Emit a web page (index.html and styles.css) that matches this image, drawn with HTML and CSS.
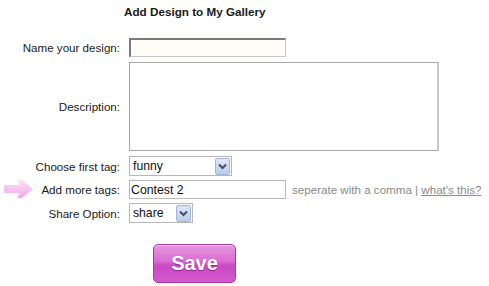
FILE: index.html
```html
<!DOCTYPE html>
<html>
<head>
<meta charset="utf-8">
<link rel="stylesheet" href="styles.css">
</head>
<body>
<div class="page">
  <h1 class="title">Add Design to My Gallery</h1>
  <form class="form">
    <div class="row row-name">
      <label class="label">Name your design:</label>
      <input class="text text-name" type="text">
    </div>
    <div class="row row-desc">
      <label class="label">Description:</label>
      <textarea class="area"></textarea>
    </div>
    <div class="row row-first">
      <label class="label">Choose first tag:</label>
      <div class="select select-first">
        <span class="select-value">funny</span>
        <span class="select-btn"><svg width="9" height="7" viewBox="0 0 9 7"><path d="M1 1.5 L4.5 5 L8 1.5" fill="none" stroke="#3b4f78" stroke-width="2"/></svg></span>
      </div>
    </div>
    <div class="row row-more">
      <span class="pointer"><svg width="30" height="20" viewBox="0 0 30 20"><defs><linearGradient id="pg" x1="0" y1="0" x2="0" y2="1"><stop offset="0" stop-color="#fbe0f7"/><stop offset="0.5" stop-color="#f7c4ef"/><stop offset="1" stop-color="#f3a8e8"/></linearGradient></defs><path d="M0 6 H16 L13 1 H18 L29 10 L18 19 H13 L16 14 H0 Z" fill="url(#pg)"/></svg></span>
      <label class="label">Add more tags:</label>
      <input class="text text-tags" type="text" value="Contest 2">
      <span class="hint">seperate with a comma | <a class="hint-link" href="#">what's this?</a></span>
    </div>
    <div class="row row-share">
      <label class="label">Share Option:</label>
      <div class="select select-share">
        <span class="select-value">share</span>
        <span class="select-btn"><svg width="9" height="7" viewBox="0 0 9 7"><path d="M1 1.5 L4.5 5 L8 1.5" fill="none" stroke="#3b4f78" stroke-width="2"/></svg></span>
      </div>
    </div>
    <div class="actions">
      <button class="save" type="button">Save</button>
    </div>
  </form>
</div>
</body>
</html>
```

FILE: styles.css
```css
html, body {
  margin: 0;
  padding: 0;
  background: #ffffff;
}
body {
  font-family: "Liberation Sans", Arial, sans-serif;
  font-size: 11.6px;
  color: #1a1a1a;
}
.page {
  width: 489px;
  height: 286px;
  overflow: hidden;
}
.title {
  margin: 0;
  padding: 5px 0 0 124px;
  font-size: 11.7px;
  font-weight: bold;
  line-height: 14px;
  color: #1a1a1a;
}
.form {
  margin: 19px 0 0 0;
}
.row {
  position: relative;
  display: flex;
  align-items: center;
}
.label {
  width: 121px;
  text-align: right;
  padding-right: 1px;
  box-sizing: border-box;
  font-size: 11.6px;
  white-space: nowrap;
}
.row-name { height: 19px; }
.row-desc { margin-top: 5px; height: 89px; }
.row-first { margin-top: 5px; height: 20px; }
.row-more { margin-top: 4px; height: 19px; }
.row-share { margin-top: 4px; height: 20px; }
.text {
  margin: 0 0 0 8px;
  box-sizing: border-box;
  width: 157px;
  height: 19px;
  padding: 0 1px;
  font-family: "Liberation Sans", Arial, sans-serif;
  font-size: 12.3px;
  color: #111111;
  outline: none;
}
.text-name {
  border: 1px solid #c8c8c8;
  border-top: 2px solid #7a7a7a;
  border-left: 2px solid #7a7a7a;
  background: #fffef6;
}
.text-tags {
  border: 1px solid #b9b9b9;
  background: #ffffff;
}
.area {
  margin: 0 0 0 8px;
  box-sizing: border-box;
  width: 310px;
  height: 89px;
  border: 1px solid #a9a9a9;
  border-right: 2px solid #c9c9c9;
  background: #ffffff;
  resize: none;
  outline: none;
}
.select {
  margin-left: 8px;
  box-sizing: border-box;
  height: 20px;
  border: 1px solid #b7b7b7;
  background: #ffffff;
  display: flex;
  align-items: center;
  justify-content: space-between;
  padding: 0 1px 0 3px;
}
.select-first { width: 103px; }
.select-share { width: 64px; }
.select-value {
  font-size: 12.2px;
  color: #111111;
}
.select-btn {
  box-sizing: border-box;
  width: 15px;
  height: 17px;
  border: 1px solid #a3b7da;
  border-radius: 2px;
  background: linear-gradient(#dde7f7, #bccde9);
  display: flex;
  align-items: center;
  justify-content: center;
}
.select-btn svg { display: block; }
.pointer {
  position: absolute;
  left: 4px;
  top: -1px;
}
.pointer svg { display: block; }
.hint {
  margin-left: 6px;
  font-size: 11.6px;
  color: #8a8a8a;
  white-space: nowrap;
}
.hint-link {
  color: #8a8a8a;
  text-decoration: underline;
}
.actions {
  margin-top: 21px;
  padding-left: 153px;
}
.save {
  box-sizing: border-box;
  width: 83px;
  height: 39px;
  border: 1px solid #a8379f;
  border-radius: 5px;
  background: linear-gradient(#e597df 0%, #da6bd3 45%, #cb49c4 55%, #d259cd 100%);
  box-shadow: inset 0 1px 0 rgba(255,255,255,0.5);
  color: #ffffff;
  font-family: "Liberation Sans", Arial, sans-serif;
  font-weight: bold;
  font-size: 20px;
  text-shadow: 0 1px 1px rgba(80,0,80,0.55);
  padding: 0;
  cursor: pointer;
}
```
